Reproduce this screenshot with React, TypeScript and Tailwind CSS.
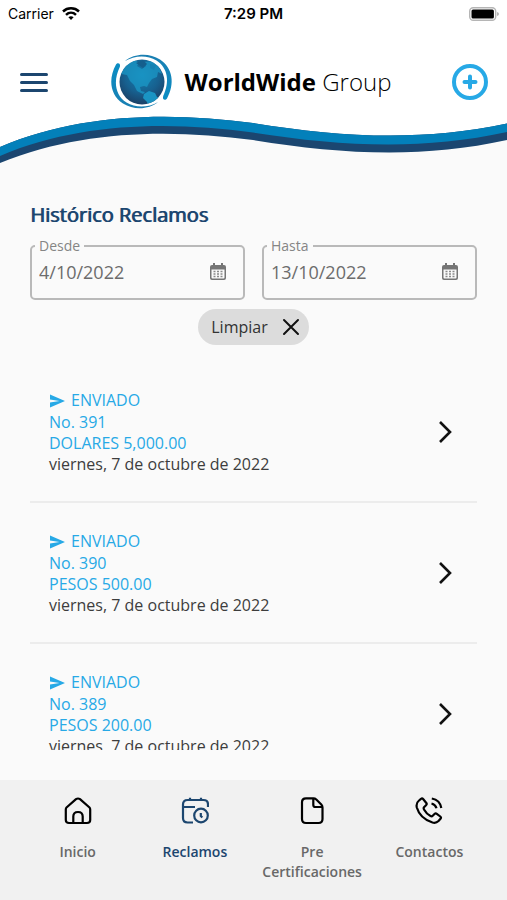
import React from "react"

interface Claim {
  id: number
  amount: string
  date: string
}

const claims: Claim[] = [
  { id: 391, amount: "DOLARES 5,000.00", date: "viernes, 7 de octubre de 2022" },
  { id: 390, amount: "PESOS 500.00", date: "viernes, 7 de octubre de 2022" },
  { id: 389, amount: "PESOS 200.00", date: "viernes, 7 de octubre de 2022" },
]

function StatusBar() {
  return (
    <div className="grid h-7 grid-cols-3 items-center px-2 font-['Inter',sans-serif] text-sm text-black">
      <div className="flex items-center gap-2">
        <span>Carrier</span>
        <svg width="18" height="14" viewBox="0 0 18 14" fill="none" stroke="#000" strokeWidth="2.500">
          <path d="M1 4.500C5.500 .3 12.500 .3 17 4.500" />
          <path d="M4 7.800C6.900 5.100 11.100 5.100 14 7.800" />
          <path d="M6.400 10.300Q9 8.100 11.600 10.300L9 13.100Z" fill="#000" stroke="none" />
        </svg>
      </div>
      <span className="text-center text-[15px] font-semibold">7:29 PM</span>
      <svg className="justify-self-end" width="30" height="14" viewBox="0 0 30 14">
        <rect x=".7" y=".7" width="26" height="12.600" rx="3.500" fill="#fff" stroke="#b5b5b5" strokeWidth="1.400" />
        <rect x="2.500" y="2.500" width="22.400" height="9" rx="1.500" fill="#000" />
        <path d="M28 5v4q2-.5 2-2t-2-2z" fill="#b5b5b5" />
      </svg>
    </div>
  )
}

function Globe() {
  return (
    <svg width="66" height="60" viewBox="0 0 66 60">
      <defs>
        <radialGradient id="sea" cx=".5" cy=".35" r=".65">
          <stop offset="0" stopColor="#137fb0" />
          <stop offset=".6" stopColor="#17608f" />
          <stop offset="1" stopColor="#1b4167" />
        </radialGradient>
        <linearGradient id="swoosh" x1="0" y1="0" x2="0" y2="1">
          <stop offset="0" stopColor="#0a8dc4" />
          <stop offset="1" stopColor="#1a7fb2" />
        </linearGradient>
        <clipPath id="disc">
          <circle cx="33" cy="30" r="22.500" />
        </clipPath>
      </defs>
      <path
        id="ring"
        d="M7 12.500C-1 27 1 43 14 51.500C25 58.500 40 57.500 49 50C40 55.500 27 56.500 17.500 50.500C6 43 4 29 10.800 15C12 11 8.500 10 7 12.500Z"
        fill="url(#swoosh)"
      />
      <use href="#ring" transform="rotate(180 32.500 29.500)" />
      <circle cx="33" cy="30" r="22.500" fill="url(#sea)" />
      <g clipPath="url(#disc)" fill="#1b9bcb">
        <path d="M12 22L17 12L26 8L30 11L28 14L33 17L37 14L35 10L44 9L50 15L53 22L49 20L48 25L43 27L40 31L38 35L35 34L31 35L32 39L36 40L34 42L28 39L25 33L21 29L18 23Z" opacity=".7" />
        <path d="M35 42L40 39L46 41L48 45L53 47L49 53L40 57L38 50L34 46Z" opacity=".9" />
        <path d="M27 11L34 8L38 12L34 16Z" fill="#155f8d" />
        <path d="M41 12L47 13L45 18L41 16Z" fill="#1782b3" />
      </g>
    </svg>
  )
}

function Header() {
  return (
    <header className="shrink-0">
      <div className="bg-white">
        <StatusBar />
        <div className="flex items-center justify-between pt-5 pr-[19px] pl-5">
          <button type="button" aria-label="Menú" className="flex w-7 flex-col gap-[5px]">
            <span className="h-[3px] rounded-full bg-[#1c466f]" />
            <span className="h-[3px] rounded-full bg-[#1c466f]" />
            <span className="h-[3px] rounded-full bg-[#1c466f]" />
          </button>
          <div className="flex h-[68px] items-center gap-2.5">
            <Globe />
            <p className="font-['Open_Sans',sans-serif] text-2xl whitespace-nowrap text-black">
              <b className="font-bold">WorldWide</b> <span className="font-light">Group</span>
            </p>
          </div>
          <button type="button" aria-label="Nuevo reclamo">
            <svg width="36" height="36" viewBox="0 0 36 36" fill="none" stroke="#27a9e6">
              <circle cx="18" cy="18" r="16" strokeWidth="4" />
              <path d="M18 12.500v11M12.500 18h11" strokeWidth="4" strokeLinecap="round" />
            </svg>
          </button>
        </div>
      </div>
      <svg className="block h-12 w-full" viewBox="0 0 507 48" preserveAspectRatio="none">
        <path d="M0 0H507V10C420 25 350 20 265 9C170-3 80-2 0 32Z" fill="#fff" />
        <path d="M0 31C80-3 170-4 253 7C340 21 420 26 507 7.500V24C420 43 340 38 253 24C170 13 80 14 0 47Z" fill="#1b4670" />
        <path d="M0 31C80-3 170-4 253 7C340 21 420 26 507 7.500V16C420 35 340 30 253 16.500C170 5.500 80 6 0 40Z" fill="#0380ba" />
      </svg>
    </header>
  )
}

function DateField({ id, label, value }: { id: string; label: string; value: string }) {
  return (
    <fieldset className="h-[62px] min-w-0 rounded-[5px] border-2 border-[#b9b9b9] px-[3px]">
      <legend className="px-1 text-sm leading-4 text-[#858585]">
        <label htmlFor={id}>{label}</label>
      </legend>
      <div className="flex h-9 items-center pr-3.5 pl-1">
        <input
          id={id}
          type="text"
          defaultValue={value}
          className="w-full min-w-0 bg-transparent text-lg leading-6 text-[#6c6c6c] outline-none"
        />
        <svg className="shrink-0" width="16" height="18" viewBox="0 0 16 18">
          <path d="M3 0h2v2h6V0h2v2h1q2 0 2 2v11q0 2-2 2H2q-2 0-2-2V4q0-2 2-2h1z" fill="#757575" />
          <path d="M1.500 6.500h13v8q0 1-1 1h-11q-1 0-1-1z" fill="#fafafa" />
          <path
            d="M3.500 8.500h2m1.500 0h2m1.500 0h2M3.500 11h2m1.500 0h2m1.500 0h2M3.500 13.500h2m1.500 0h2m1.500 0h2"
            stroke="#8a8a8a"
            strokeWidth="1.400"
          />
        </svg>
      </div>
    </fieldset>
  )
}

function ClaimRow({ claim }: { claim: Claim }) {
  return (
    <li className="border-b-2 border-[#ececec]">
      <a href={`#reclamo-${claim.id}`} className="flex items-center justify-between pt-[27px] pr-6 pb-[26px] pl-[19px]">
        <div className="leading-[21px] text-[#27a9e6]">
          <p className="flex items-center gap-1.5 leading-[23px]">
            <svg width="16" height="14" viewBox="0 0 16 14" fill="#27a9e6">
              <path d="M1 .5L16 7L1 13.500V8.600L10.500 7L1 5.400Z" />
            </svg>
            ENVIADO
          </p>
          <p>No. {claim.id}</p>
          <p>{claim.amount}</p>
          <p className="text-[#3d3d3d]">{claim.date}</p>
        </div>
        <svg width="16" height="24" viewBox="0 0 16 24" fill="none" stroke="#111" strokeWidth="2.600">
          <path d="M3 2L13 12L3 22" />
        </svg>
      </a>
    </li>
  )
}

const tabs = [
  {
    label: "Inicio",
    icon: (
      <>
        <path d="M2.500 10.500L12 2.200Q14 .8 16 2.200L25.500 10.500Q26.200 11.200 26.200 12.500V23Q26.200 26 23 26H5Q1.800 26 1.800 23V12.500Q1.800 11.200 2.500 10.500Z" />
        <path d="M9.300 26V19.500Q9.300 15 14 15T18.700 19.500V26" />
      </>
    ),
  },
  {
    label: "Reclamos",
    active: true,
    icon: (
      <>
        <path d="M12 25.500H6.500Q2 25.500 2 21V7.500Q2 3 6.500 3H22.500Q27 3 27 7.500V10" />
        <path d="M2 10H14M9 .8V3M20 .8V3" />
        <circle cx="20" cy="18.500" r="6.800" />
        <path d="M19.800 16V19L21.300 20.500" />
      </>
    ),
  },
  {
    label: "Pre Certificaciones",
    icon: (
      <>
        <path d="M8 1.300H15.500Q17 1.300 18.300 2.500L23.300 7.500Q24.500 8.800 24.500 10.500V22Q24.500 26 20.500 26H8Q4 26 4 22V5.300Q4 1.300 8 1.300Z" />
        <path d="M15.300 1.500V8Q15.300 10 17.300 10H24.300" />
      </>
    ),
  },
  {
    label: "Contactos",
    icon: (
      <>
        <path d="M4 3.500L6 1.800Q7.200 1 8.300 2.200L11.300 6Q12.200 7.200 11 8.300L9 10.300Q8.300 11.200 9 12.500Q11.500 17 15.500 19Q16.800 19.700 17.700 18.800L19.500 17Q20.600 15.900 21.800 16.800L25.300 19.500Q26.500 20.500 25.500 21.700L23.500 24Q21 26.500 17.500 25.500Q5 21.500 1.800 10.500Q.8 6 4 3.500Z" />
        <path d="M16.500 6.500Q20.500 7.500 21.500 11.300M16.800 1.500Q25 3 26.300 11" />
      </>
    ),
  },
]

function TabBar() {
  return (
    <nav className="grid h-[120px] shrink-0 grid-cols-4 bg-[#f1f1f1] px-[19px] pt-[17px]">
      {tabs.map((tab) => (
        <a
          key={tab.label}
          href={`#${tab.label}`}
          className={
            tab.active
              ? "flex flex-col items-center gap-[17px] text-[#1c466f]"
              : "flex flex-col items-center gap-[17px] text-[#686868]"
          }
        >
          <svg
            className={tab.active ? "shrink-0 text-[#1c466f]" : "shrink-0 text-black"}
            width="28"
            height="28"
            viewBox="0 0 28 28"
            fill="none"
            stroke="currentColor"
            strokeWidth="2.200"
            strokeLinejoin="round"
          >
            {tab.icon}
          </svg>
          <span className="text-center text-sm font-semibold">{tab.label}</span>
        </a>
      ))}
    </nav>
  )
}

export default function App() {
  return (
    <div className="flex h-screen flex-col bg-[#fafafa] font-['Open_Sans',sans-serif]">
      <Header />
      <main className="flex min-h-0 flex-1 flex-col px-[30px] pt-[37px] pb-[30px]">
        <h1 className="text-xl leading-7 text-[#1c466f] [text-shadow:1px_0_0_currentColor]">Histórico Reclamos</h1>
        <div className="mt-[9px] grid grid-cols-2 gap-[17px]">
          <DateField id="desde" label="Desde" value="4/10/2022" />
          <DateField id="hasta" label="Hasta" value="13/10/2022" />
        </div>
        <button
          type="button"
          className="mt-[9px] flex h-9 shrink-0 items-center gap-[13px] self-center rounded-full bg-[#dcdcdc] pr-2 pl-[13px] text-[#333]"
        >
          Limpiar
          <svg width="20" height="20" viewBox="0 0 20 20" stroke="#111" strokeWidth="2" strokeLinecap="round">
            <path d="M3 3L17 17M17 3L3 17" />
          </svg>
        </button>
        <ul className="mt-[17px] min-h-0 flex-1 overflow-y-auto [scrollbar-width:none]">
          {claims.map((claim) => (
            <ClaimRow key={claim.id} claim={claim} />
          ))}
        </ul>
      </main>
      <TabBar />
    </div>
  )
}
